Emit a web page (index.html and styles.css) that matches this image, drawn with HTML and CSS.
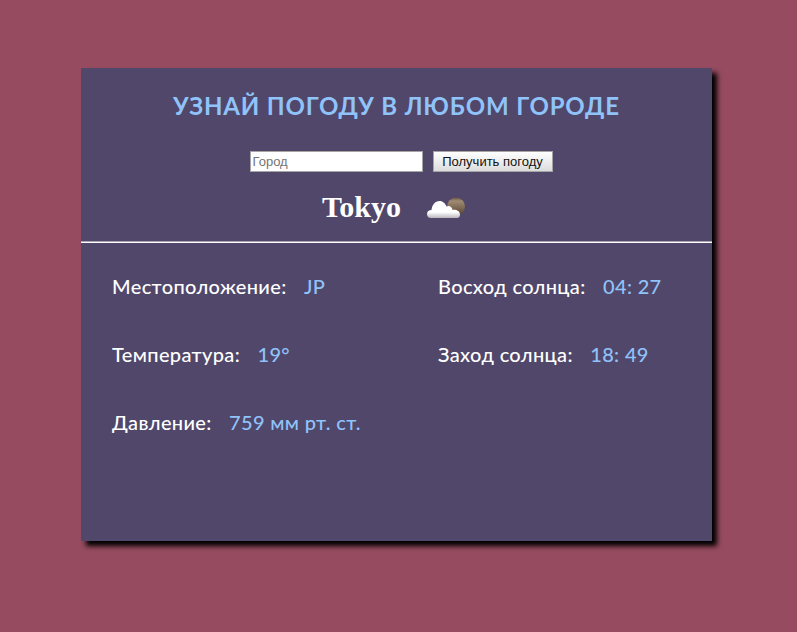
FILE: index.html
```html
<!DOCTYPE html>
<html lang="ru">
<head>
    <meta charset="UTF-8">
    <meta name="viewport" content="width=device-width, initial-scale=1.0">
    <title>Узнай погоду в любом городе</title>
    <link rel="stylesheet" href="styles.css">
</head>
<body>
    <div class="card">
        <h1 class="title">УЗНАЙ ПОГОДУ В ЛЮБОМ ГОРОДЕ</h1>

        <form class="search">
            <input type="text" class="search-input" placeholder="Город">
            <button type="button" class="search-button">Получить погоду</button>
        </form>

        <div class="city">
            <h2 class="city-name">Tokyo</h2>
            <svg class="city-icon" width="42" height="28" viewBox="0 0 42 28">
                <defs>
                    <linearGradient id="moon" x1="0" y1="0" x2="0" y2="1">
                        <stop offset="0" stop-color="#6b5642"/>
                        <stop offset="0.2" stop-color="#a08b74"/>
                        <stop offset="1" stop-color="#55412f"/>
                    </linearGradient>
                    <linearGradient id="cloud" x1="0" y1="0" x2="0" y2="1">
                        <stop offset="0" stop-color="#ffffff"/>
                        <stop offset="0.65" stop-color="#ffffff"/>
                        <stop offset="1" stop-color="#b9b6bd"/>
                    </linearGradient>
                </defs>
                <circle cx="30" cy="13.500" r="9" fill="url(#moon)"/>
                <path d="M5 25 C2 25 1 23 1 21 C1 18.500 3 17 5.500 17 C6 12 9 8 13.500 8 C17 8 19.500 10.500 20.500 13.500 C22 12.500 24.500 13 25.500 14.500 C26 15.500 26.500 16 26.500 17 C29 16 34 17.500 34 21.500 C34 23.500 33 25 31 25 Z" fill="url(#cloud)"/>
            </svg>
        </div>

        <hr class="divider">

        <div class="details">
            <p class="detail">Местоположение: <span class="value">JP</span></p>
            <p class="detail">Восход солнца: <span class="value">04: 27</span></p>
            <p class="detail">Температура: <span class="value">19°</span></p>
            <p class="detail">Заход солнца: <span class="value">18: 49</span></p>
            <p class="detail">Давление: <span class="value">759 мм рт. ст.</span></p>
        </div>
    </div>
</body>
</html>
```

FILE: styles.css
```css
html {
    height: 100%;
}

body {
    box-sizing: border-box;
    min-height: 100%;
    background-color: #964b60;
    margin: 0;
    padding: 68px 0 0 81px;
    font-family: "Comic Sans MS", "Lato", "Noto Sans", sans-serif;
}

.card {
    box-sizing: border-box;
    width: 631px;
    height: 473px;
    background-color: #51476a;
    box-shadow: 5px 5px 5px #000;
    color: #fff;
}

.title {
    margin: 0;
    padding-top: 22px;
    font-size: 24px;
    line-height: 32px;
    font-weight: bold;
    text-align: center;
    color: #90c3fa;
    letter-spacing: 0.85px;
}

.search {
    display: flex;
    justify-content: center;
    gap: 10px;
    margin-top: 29px;
    padding-left: 9px;
}

.search-input {
    box-sizing: border-box;
    width: 173px;
    height: 21px;
    padding: 0 2px;
    border: 1px solid #a5a5a5;
    border-radius: 0;
    background: #fff;
    font-family: "Liberation Sans", sans-serif;
    font-size: 13px;
}

.search-input::placeholder {
    color: #757575;
}

.search-button {
    box-sizing: border-box;
    width: 120px;
    height: 21px;
    padding: 0;
    border: 1px solid #a5a5a5;
    border-radius: 0;
    background: linear-gradient(#ffffff, #dcdcdc);
    color: #111;
    font-family: "Liberation Sans", sans-serif;
    font-size: 13px;
}

.city {
    display: flex;
    justify-content: center;
    align-items: center;
    gap: 25px;
    height: 42px;
    margin-top: 14px;
    padding-right: 3px;
}

.city-name {
    margin: 0;
    font-family: "Liberation Serif", serif;
    font-size: 30px;
    font-weight: bold;
}

.divider {
    box-sizing: border-box;
    height: 2px;
    margin: 13px 0 0;
    border: none;
    border-top: 1px solid #a8a4b4;
    background: #fff;
}

.details {
    display: grid;
    grid-template-columns: 326px 1fr;
    grid-auto-rows: 68px;
    padding: 26px 0 0 31px;
}

.detail {
    margin: 0;
    font-size: 20px;
    line-height: 34px;
    font-weight: 500;
    letter-spacing: 0.35px;
}

.value {
    margin-left: 12px;
    color: #90c3fa;
}
```
